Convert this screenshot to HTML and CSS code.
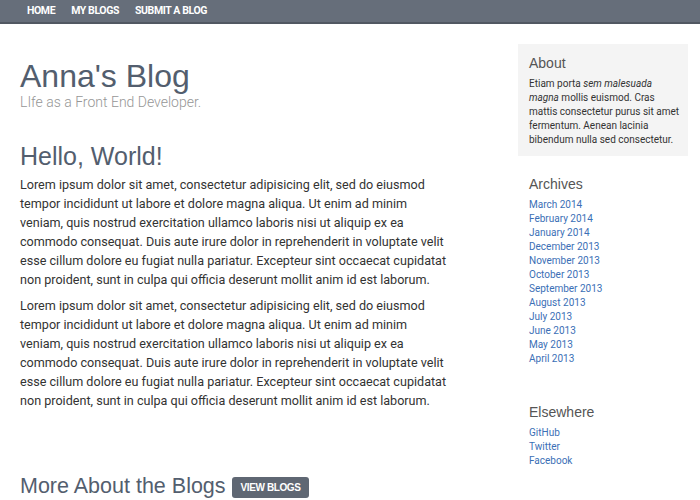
FILE: index.html
```html
<!DOCTYPE html>
<html>
<head>
<meta charset="utf-8">
<link rel="stylesheet" href="styles.css">
</head>
<body>
<nav class="topnav">
  <a href="#">HOME</a>
  <a href="#">MY BLOGS</a>
  <a href="#">SUBMIT A BLOG</a>
</nav>
<div class="page">
  <main class="content">
    <header class="blog-header">
      <h1 class="blog-title">Anna's Blog</h1>
      <p class="blog-tagline">LIfe as a Front End Developer.</p>
    </header>
    <article class="post">
      <h2 class="post-title">Hello, World!</h2>
      <p>Lorem ipsum dolor sit amet, consectetur adipisicing elit, sed do eiusmod tempor incididunt ut labore et dolore magna aliqua. Ut enim ad minim veniam, quis nostrud exercitation ullamco laboris nisi ut aliquip ex ea commodo consequat. Duis aute irure dolor in reprehenderit in voluptate velit esse cillum dolore eu fugiat nulla pariatur. Excepteur sint occaecat cupidatat non proident, sunt in culpa qui officia deserunt mollit anim id est laborum.</p>
      <p>Lorem ipsum dolor sit amet, consectetur adipisicing elit, sed do eiusmod tempor incididunt ut labore et dolore magna aliqua. Ut enim ad minim veniam, quis nostrud exercitation ullamco laboris nisi ut aliquip ex ea commodo consequat. Duis aute irure dolor in reprehenderit in voluptate velit esse cillum dolore eu fugiat nulla pariatur. Excepteur sint occaecat cupidatat non proident, sunt in culpa qui officia deserunt mollit anim id est laborum.</p>
    </article>
    <section class="more">
      <h2 class="more-title">More About the Blogs</h2>
      <a class="btn" href="#">VIEW BLOGS</a>
    </section>
  </main>
  <aside class="sidebar">
    <div class="about">
      <h4 class="side-title">About</h4>
      <p>Etiam porta <em>sem malesuada magna</em> mollis euismod. Cras mattis consectetur purus sit amet fermentum. Aenean lacinia bibendum nulla sed consectetur.</p>
    </div>
    <div class="side-module">
      <h4 class="side-title">Archives</h4>
      <ul class="side-list">
        <li><a href="#">March 2014</a></li>
        <li><a href="#">February 2014</a></li>
        <li><a href="#">January 2014</a></li>
        <li><a href="#">December 2013</a></li>
        <li><a href="#">November 2013</a></li>
        <li><a href="#">October 2013</a></li>
        <li><a href="#">September 2013</a></li>
        <li><a href="#">August 2013</a></li>
        <li><a href="#">July 2013</a></li>
        <li><a href="#">June 2013</a></li>
        <li><a href="#">May 2013</a></li>
        <li><a href="#">April 2013</a></li>
      </ul>
    </div>
    <div class="side-module elsewhere">
      <h4 class="side-title">Elsewhere</h4>
      <ul class="side-list">
        <li><a href="#">GitHub</a></li>
        <li><a href="#">Twitter</a></li>
        <li><a href="#">Facebook</a></li>
      </ul>
    </div>
  </aside>
</div>
</body>
</html>
```
FILE: styles.css
```css
* { box-sizing: border-box; }
body {
  margin: 0;
  font-family: Roboto, "Liberation Sans", sans-serif;
  color: #333;
  background: #fff;
}
.topnav {
  height: 24px;
  background: #666e7a;
  border-bottom: 2px solid #515862;
  display: flex;
  align-items: center;
  gap: 16px;
  padding: 0 0 1px 27px;
}
.topnav a {
  color: #fff;
  font-size: 10.5px;
  font-weight: 700;
  letter-spacing: -0.4px;
  text-decoration: none;
}
.page {
  display: flex;
  padding: 20px 12px 0 20px;
  gap: 68px;
}
.content {
  width: 430px;
  flex: none;
}
.blog-header { padding-top: 14px; }
.blog-title {
  font-family: "Liberation Sans", Arial, sans-serif;
  font-weight: 400;
  font-size: 32px;
  line-height: 36px;
  color: #535e6e;
  margin: 0;
}
.blog-tagline {
  margin: 0;
  font-size: 14px;
  font-weight: 300;
  color: #969696;
  line-height: 17px;
}
.post-title {
  font-family: "Liberation Sans", Arial, sans-serif;
  font-weight: 400;
  font-size: 25px;
  line-height: 30px;
  color: #535e6e;
  margin: 30px 0 4px;
}
.post p {
  font-size: 12.6px;
  line-height: 19px;
  margin: 0 0 7px;
  color: #333;
}
.more {
  display: flex;
  align-items: center;
  gap: 6px;
  margin-top: 63px;
}
.more-title {
  font-family: "Liberation Sans", Arial, sans-serif;
  font-weight: 400;
  font-size: 21.5px;
  line-height: 26px;
  color: #535e6e;
  margin: 0;
}
.btn {
  background: #5f6773;
  color: #fff;
  font-family: "Liberation Sans", Arial, sans-serif;
  font-weight: 700;
  font-size: 10px;
  line-height: 11px;
  letter-spacing: -0.4px;
  text-decoration: none;
  padding: 5px 9px;
  border-radius: 3px;
  margin-top: 2px;
}
.sidebar {
  width: 170px;
  flex: none;
}
.about {
  background: #f4f4f4;
  padding: 10px 8px 9px 11px;
}
.side-title {
  font-family: "Liberation Sans", Arial, sans-serif;
  font-weight: 400;
  font-size: 14px;
  line-height: 18px;
  color: #555;
  margin: 0 0 5px;
}
.about p {
  margin: 0;
  font-size: 10px;
  line-height: 14px;
  color: #333;
}
.side-module {
  padding: 0 11px;
  margin-top: 19px;
}
.elsewhere { margin-top: 37px; }
.side-list {
  list-style: none;
  margin: 0;
  padding: 0;
}
.side-list li {
  font-size: 10px;
  line-height: 14px;
}
.side-list a {
  color: #3b6fb6;
  text-decoration: none;
}
```
